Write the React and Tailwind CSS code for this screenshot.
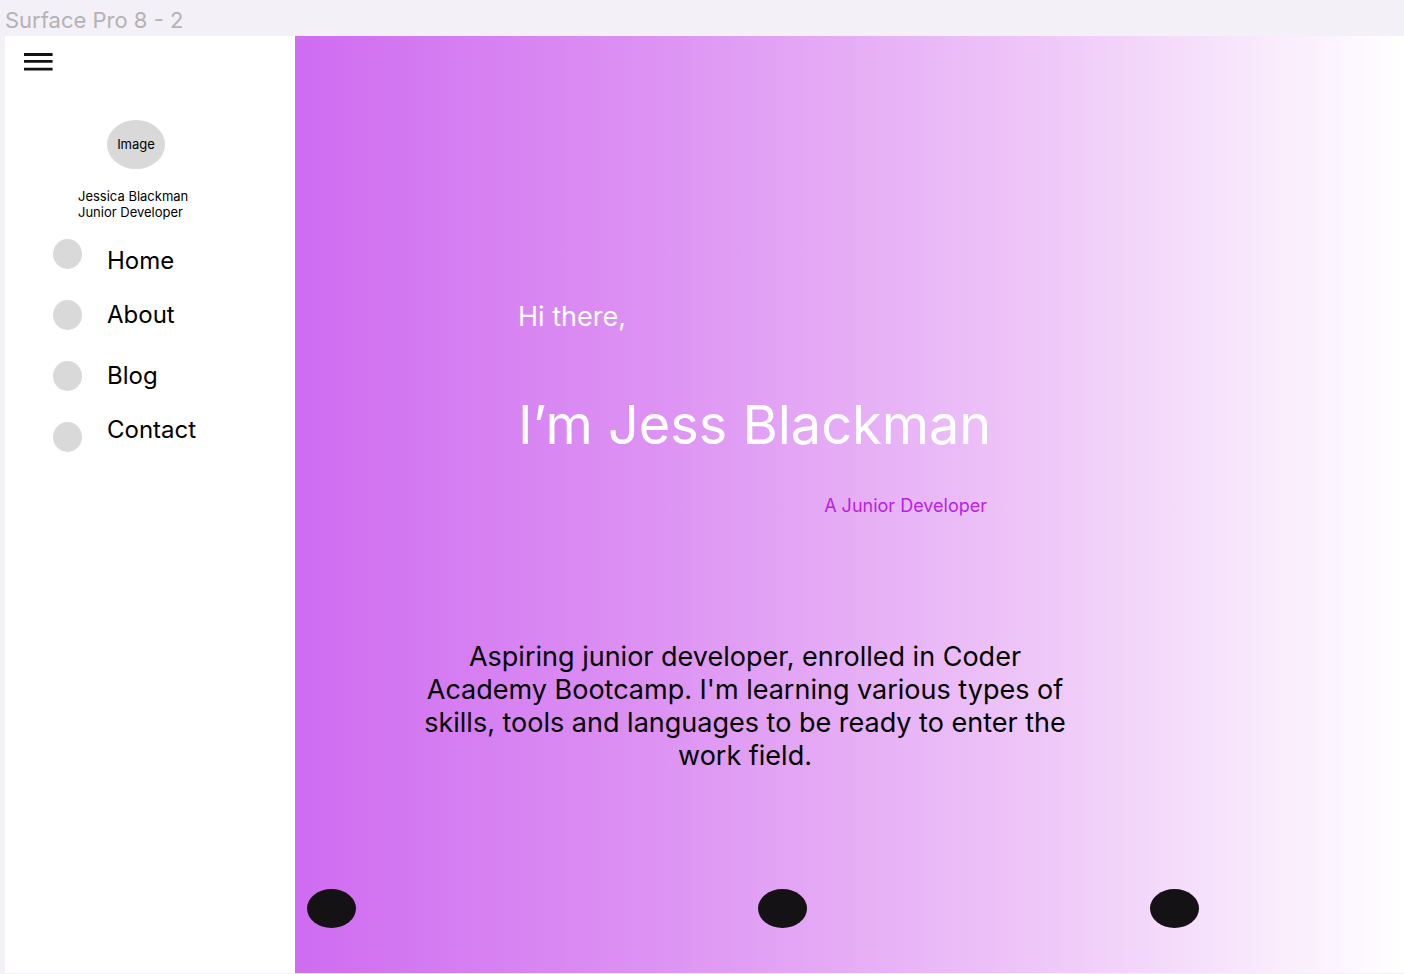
const links = [
  { label: "Home", offset: "pt-[7px]" },
  { label: "About", offset: "pt-0" },
  { label: "Blog", offset: "pt-0" },
  { label: "Contact", offset: "-mt-[7px]" },
];

export default function App() {
  return (
    <div className="flex min-h-screen flex-col bg-[#f3f0f7] pb-px pl-[5px] font-['Inter',sans-serif] text-black">
      <header className="h-9 pt-1 text-[22px] leading-8 text-[#b3b3b3]">Surface Pro 8 - 2</header>
      <div className="flex flex-1 bg-white">
        <aside className="w-[290px] shrink-0 bg-white">
          <button type="button" aria-label="Menu" className="mt-4 ml-[19px] block">
            <svg width="29" height="19" viewBox="0 0 29 19" stroke="#141215" strokeWidth="2.8">
              <path d="M0 2.5H28.6M0 9.4H28.6M0 17.1H28.6" />
            </svg>
          </button>
          <div className="mt-[49px] ml-[102px] flex h-[49px] w-[58px] items-center justify-center rounded-[50%] bg-[#d9d9d9] text-[13px]">
            Image
          </div>
          <p className="mt-[19px] ml-[73px] text-[13px] leading-4">
            Jessica Blackman
            <br />
            Junior Developer
          </p>
          <nav className="mt-[19px] ml-12 flex flex-col">
            {links.map((l) => (
              <a key={l.label} href="#" className="flex h-[61px] items-start gap-[25px]">
                <span className="h-[30px] w-[29px] rounded-[50%] bg-[#d9d9d9]" />
                <span className={`text-2xl leading-[30px] ${l.offset}`}>{l.label}</span>
              </a>
            ))}
          </nav>
        </aside>
        <main className="flex flex-1 flex-col bg-[linear-gradient(90deg,#cf6cf1_0%,#dd93f3_33%,#eec7f8_67%,#ffffff_100%)]">
          <section className="ml-[223px] flex w-[469px] flex-col pt-[263px] text-white">
            <p className="text-[27px] leading-9">Hi there,</p>
            <h1 className="mt-14 text-[54px] leading-[68px] whitespace-nowrap">I’m Jess Blackman</h1>
            <p className="mt-[35px] text-right text-[18px] leading-6 text-[#b81fe5]">A Junior Developer</p>
          </section>
          <p className="mt-[122px] ml-[120px] w-[660px] text-center text-[27px] leading-[33px]">
            Aspiring junior developer, enrolled in Coder Academy Bootcamp. I'm learning various types of skills, tools and languages to be ready to enter the work field.
          </p>
          <div className="mt-auto mb-[45px] flex pl-3">
            <span className="h-[39px] w-[49px] rounded-[50%] bg-[#141215]" />
            <span className="ml-[402px] h-[39px] w-[49px] rounded-[50%] bg-[#141215]" />
            <span className="ml-[343px] h-[39px] w-[49px] rounded-[50%] bg-[#141215]" />
          </div>
        </main>
      </div>
    </div>
  );
}
